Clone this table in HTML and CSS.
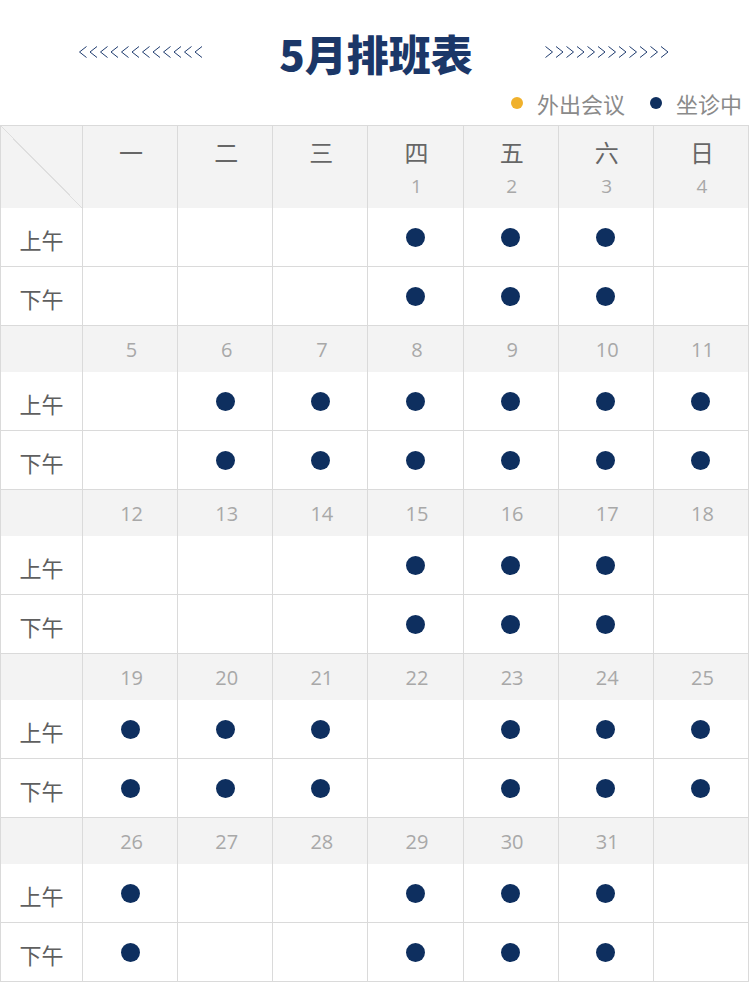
FILE: index.html
```html
<!DOCTYPE html>
<html lang="zh">
<head>
<meta charset="utf-8">
<title>5月排班表</title>
<link rel="stylesheet" href="styles.css">
</head>
<body>
<div class="page">
  <div class="title-row">
    <svg class="arrows" width="125" height="12" viewBox="0 0 125 12"><path d="M7.5 .5L.5 6L7.5 11.5M18 .5L11 6L18 11.5M28.5 .5L21.5 6L28.5 11.5M39 .5L32 6L39 11.5M49.5 .5L42.5 6L49.5 11.5M60 .5L53 6L60 11.5M70.5 .5L63.5 6L70.5 11.5M81 .5L74 6L81 11.5M91.5 .5L84.5 6L91.5 11.5M102 .5L95 6L102 11.5M112.5 .5L105.5 6L112.5 11.5M123 .5L116 6L123 11.5"/></svg>
    <h1 class="title">5月排班表</h1>
    <svg class="arrows" width="125" height="12" viewBox="0 0 125 12"><path d="M.5 .5L7.5 6L.5 11.5M11 .5L18 6L11 11.5M21.5 .5L28.5 6L21.5 11.5M32 .5L39 6L32 11.5M42.5 .5L49.5 6L42.5 11.5M53 .5L60 6L53 11.5M63.5 .5L70.5 6L63.5 11.5M74 .5L81 6L74 11.5M84.5 .5L91.5 6L84.5 11.5M95 .5L102 6L95 11.5M105.5 .5L112.5 6L105.5 11.5M116 .5L123 6L116 11.5"/></svg>
  </div>
  <div class="legend">
    <span class="legend-item"><i class="ldot orange"></i>外出会议</span>
    <span class="legend-item"><i class="ldot navy"></i>坐诊中</span>
  </div>

  <div class="grid">
    <!-- header -->
    <div class="cell head corner"></div>
    <div class="cell head"><span class="wd">一</span><span class="hd"></span></div>
    <div class="cell head"><span class="wd">二</span><span class="hd"></span></div>
    <div class="cell head"><span class="wd">三</span><span class="hd"></span></div>
    <div class="cell head"><span class="wd">四</span><span class="hd">1</span></div>
    <div class="cell head"><span class="wd">五</span><span class="hd">2</span></div>
    <div class="cell head"><span class="wd">六</span><span class="hd">3</span></div>
    <div class="cell head"><span class="wd">日</span><span class="hd">4</span></div>

    <div class="cell slot lab">上午</div>
    <div class="cell slot"></div><div class="cell slot"></div><div class="cell slot"></div>
    <div class="cell slot"><i class="dot"></i></div><div class="cell slot"><i class="dot"></i></div><div class="cell slot"><i class="dot"></i></div>
    <div class="cell slot"></div>
    <div class="cell slot lab">下午</div>
    <div class="cell slot"></div><div class="cell slot"></div><div class="cell slot"></div>
    <div class="cell slot"><i class="dot"></i></div><div class="cell slot"><i class="dot"></i></div><div class="cell slot"><i class="dot"></i></div>
    <div class="cell slot"></div>

    <!-- week 2 -->
    <div class="cell date"></div>
    <div class="cell date">5</div><div class="cell date">6</div><div class="cell date">7</div><div class="cell date">8</div><div class="cell date">9</div><div class="cell date">10</div><div class="cell date">11</div>
    <div class="cell slot lab">上午</div>
    <div class="cell slot"></div>
    <div class="cell slot"><i class="dot"></i></div><div class="cell slot"><i class="dot"></i></div><div class="cell slot"><i class="dot"></i></div><div class="cell slot"><i class="dot"></i></div><div class="cell slot"><i class="dot"></i></div><div class="cell slot"><i class="dot"></i></div>
    <div class="cell slot lab">下午</div>
    <div class="cell slot"></div>
    <div class="cell slot"><i class="dot"></i></div><div class="cell slot"><i class="dot"></i></div><div class="cell slot"><i class="dot"></i></div><div class="cell slot"><i class="dot"></i></div><div class="cell slot"><i class="dot"></i></div><div class="cell slot"><i class="dot"></i></div>

    <!-- week 3 -->
    <div class="cell date"></div>
    <div class="cell date">12</div><div class="cell date">13</div><div class="cell date">14</div><div class="cell date">15</div><div class="cell date">16</div><div class="cell date">17</div><div class="cell date">18</div>
    <div class="cell slot lab">上午</div>
    <div class="cell slot"></div><div class="cell slot"></div><div class="cell slot"></div>
    <div class="cell slot"><i class="dot"></i></div><div class="cell slot"><i class="dot"></i></div><div class="cell slot"><i class="dot"></i></div>
    <div class="cell slot"></div>
    <div class="cell slot lab">下午</div>
    <div class="cell slot"></div><div class="cell slot"></div><div class="cell slot"></div>
    <div class="cell slot"><i class="dot"></i></div><div class="cell slot"><i class="dot"></i></div><div class="cell slot"><i class="dot"></i></div>
    <div class="cell slot"></div>

    <!-- week 4 -->
    <div class="cell date"></div>
    <div class="cell date">19</div><div class="cell date">20</div><div class="cell date">21</div><div class="cell date">22</div><div class="cell date">23</div><div class="cell date">24</div><div class="cell date">25</div>
    <div class="cell slot lab">上午</div>
    <div class="cell slot"><i class="dot"></i></div><div class="cell slot"><i class="dot"></i></div><div class="cell slot"><i class="dot"></i></div>
    <div class="cell slot"></div>
    <div class="cell slot"><i class="dot"></i></div><div class="cell slot"><i class="dot"></i></div><div class="cell slot"><i class="dot"></i></div>
    <div class="cell slot lab">下午</div>
    <div class="cell slot"><i class="dot"></i></div><div class="cell slot"><i class="dot"></i></div><div class="cell slot"><i class="dot"></i></div>
    <div class="cell slot"></div>
    <div class="cell slot"><i class="dot"></i></div><div class="cell slot"><i class="dot"></i></div><div class="cell slot"><i class="dot"></i></div>

    <!-- week 5 -->
    <div class="cell date"></div>
    <div class="cell date">26</div><div class="cell date">27</div><div class="cell date">28</div><div class="cell date">29</div><div class="cell date">30</div><div class="cell date">31</div><div class="cell date"></div>
    <div class="cell slot lab">上午</div>
    <div class="cell slot"><i class="dot"></i></div>
    <div class="cell slot"></div><div class="cell slot"></div>
    <div class="cell slot"><i class="dot"></i></div><div class="cell slot"><i class="dot"></i></div><div class="cell slot"><i class="dot"></i></div>
    <div class="cell slot"></div>
    <div class="cell slot lab">下午</div>
    <div class="cell slot"><i class="dot"></i></div>
    <div class="cell slot"></div><div class="cell slot"></div>
    <div class="cell slot"><i class="dot"></i></div><div class="cell slot"><i class="dot"></i></div><div class="cell slot"><i class="dot"></i></div>
    <div class="cell slot"></div>
  </div>
</div>
</body>
</html>
```
FILE: styles.css
```css
* { box-sizing: border-box; }
html, body { margin: 0; padding: 0; background: #fff; }
body {
  font-family: "Open Sans", "Noto Sans CJK SC", sans-serif;
  width: 749px;
}
.page { width: 749px; }

.title-row {
  height: 92px;
  padding-top: 12px;
  display: flex;
  justify-content: center;
  align-items: center;
  gap: 0;
}
.title-row .arrows { display: block; }
.title-row .arrows path { fill: none; stroke: #1f3b6e; stroke-width: 1; }
.title {
  margin: 0 72px 0 75px;
  height: 80px;
  display: flex;
  align-items: center;
  font-family: "Noto Sans CJK SC", sans-serif;
  font-weight: 900;
  font-size: 42px;
  color: #1b3768;
  letter-spacing: 0;
}

.legend {
  height: 22px;
  margin-bottom: 11px;
  display: flex;
  justify-content: flex-end;
  align-items: center;
  gap: 25px;
  padding-right: 7px;
  font-family: "Noto Sans CJK SC", sans-serif;
  font-size: 22px;
  color: #8a8a8a;
}
.legend-item { display: flex; align-items: center; gap: 14px; line-height: 22px; }
.ldot { display: block; width: 12px; height: 12px; border-radius: 50%; }
.ldot.orange { background: #f0b12c; }
.ldot.navy { background: #0e2f5f; }

.grid {
  width: 749px;
  display: grid;
  grid-template-columns: 82px repeat(7, 1fr);
  border-top: 1px solid #dadada;
  border-left: 1px solid #dadada;
}
.cell {
  border-right: 1px solid #dadada;
  display: flex;
  align-items: center;
  justify-content: center;
}
.head {
  height: 82px;
  background: #f3f3f3;
  flex-direction: column;
  justify-content: flex-start;
  padding-top: 12px;
  padding-left: 2px;
}
.corner {
  background: linear-gradient(to top right, #f3f3f3 calc(50% - 0.6px), #dedede calc(50% - 0.6px), #dedede calc(50% + 0.6px), #f3f3f3 calc(50% + 0.6px));
}
.wd {
  font-family: "Noto Sans CJK SC", sans-serif;
  font-size: 24px;
  line-height: 28px;
  color: #666;
}
.hd {
  margin-top: 9px;
  height: 22px;
  font-size: 19px;
  line-height: 22px;
  color: #a8a8a8;
}
.date {
  height: 46px;
  background: #f3f3f3;
  color: #a8a8a8;
  font-size: 20px;
  padding-left: 3px;
}
.slot {
  height: 59px;
  border-bottom: 1px solid #dadada;
}
.lab {
  font-family: "Noto Sans CJK SC", sans-serif;
  font-size: 22px;
  color: #5f5f5f;
  padding-top: 3px;
}
.dot {
  display: block;
  width: 19px;
  height: 19px;
  border-radius: 50%;
  background: #0e2f5f;
}
```
